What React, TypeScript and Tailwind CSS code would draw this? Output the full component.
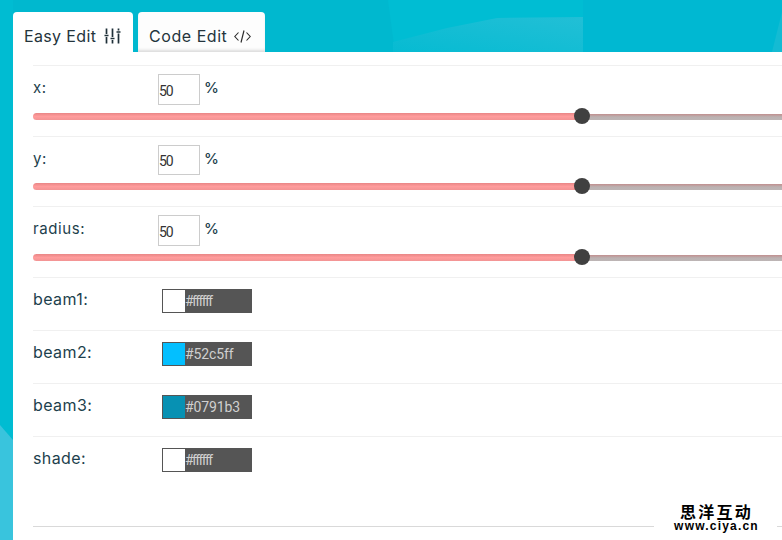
const sliders = [
  { label: "x:", value: "50" },
  { label: "y:", value: "50" },
  { label: "radius:", value: "50" },
];

const colors = [
  { label: "beam1:", hex: "#ffffff", swatch: "bg-white", spacing: "tracking-[-1.6px]" },
  { label: "beam2:", hex: "#52c5ff", swatch: "bg-[#03bfff]", spacing: "tracking-[-0.1px]" },
  { label: "beam3:", hex: "#0791b3", swatch: "bg-[#0791b3]", spacing: "tracking-[-0.1px]" },
  { label: "shade:", hex: "#ffffff", swatch: "bg-white", spacing: "tracking-[-1.6px]" },
];

const SlidersIcon = () => (
  <svg width="17" height="16" viewBox="0 0 17 16" fill="none" stroke="#1f3039" strokeWidth="1.7">
    <path d="M2.5 0.5V6M2.5 9V15.5M0.5 7.5H4.5" />
    <path d="M8.5 0.5V9M8.5 12V15.5M6.5 10.5H10.5" />
    <path d="M14.5 0.5V2.5M14.5 5.5V15.5M12.5 4H16.5" />
  </svg>
);

const CodeIcon = () => (
  <svg width="17" height="13" viewBox="0 0 17 13" fill="none" stroke="#2a2a2a" strokeWidth="1.1">
    <path d="M4.5 2.5L0.8 6.5L4.5 10.5" />
    <path d="M12.5 2.5L16.2 6.5L12.5 10.5" />
    <path d="M10 0.5L7 12.5" />
  </svg>
);

const Slider = () => (
  <div className="flex items-center w-[1098px] relative">
    <div className="h-[7px] w-[549px] rounded-l-full bg-gradient-to-b from-[#e98686] via-[#ff9c9c] to-[#f29494]" />
    <div className="h-[6px] flex-1 bg-gradient-to-b from-[#c08f8f] via-[#bbb2b2] to-[#bdb5b5]" />
    <div className="absolute left-[541px] top-[-5px] w-4 h-4 rounded-full bg-[#404040]" />
  </div>
);

export default function App() {
  return (
    <div className="relative h-[540px] w-full overflow-hidden bg-[#00b8cf] font-['Inter',sans-serif]">
      <svg className="absolute inset-0" width="782" height="540" viewBox="0 0 782 540">
        <defs>
          <linearGradient id="glow" x1="0" y1="1" x2="1" y2="0">
            <stop offset="0" stopColor="#06bbd2" />
            <stop offset="1" stopColor="#22bfd6" />
          </linearGradient>
        </defs>
        <polygon points="388,0 583,0 583,52 395,52" fill="#00bdd3" />
        <polygon points="393,52 393,42 447,28 497,18 583,17 583,52" fill="url(#glow)" />
        <polygon points="583,0 782,0 782,52 583,52" fill="#00b8d2" />
        <polygon points="772,52 782,12 782,52" fill="#14bbd3" />
        <polygon points="0,0 13,0 13,440 0,425" fill="#00bcd2" />
        <polygon points="0,425 13,440 13,540 0,540" fill="#39c4dd" />
      </svg>

      <div className="relative pt-3 pl-[13px]">
        <div className="flex gap-[5px] h-10">
          <div className="flex items-center w-[120px] pl-[11px] pt-2 gap-2 bg-white rounded-t-sm text-[16px] tracking-[0.35px] text-[#24343c]">
            <span>Easy Edit</span>
            <SlidersIcon />
          </div>
          <div className="flex items-center w-[127px] pl-[11px] pt-2 gap-[7px] bg-[#fdfdfd] rounded-t-sm text-[16px] tracking-[0.55px] text-[#24343c] shadow-[inset_0_-3px_3px_-1px_#dcdcdc]">
            <span>Code Edit</span>
            <CodeIcon />
          </div>
        </div>

        <div className="h-[488px] bg-white pl-5 pt-[13px] overflow-hidden">
          {sliders.map((s, i) => (
            <div key={s.label} className={`border-t border-[#f0f0f0] pt-2 ${i === 1 ? "h-[70px]" : "h-[71px]"}`}>
              <div className={`flex items-start ${i === 1 ? "h-[30px]" : "h-[31px]"}`}>
                <span className="w-[125px] pt-[3px] text-[15px] tracking-[0.6px] text-[#1d3f4d]">{s.label}</span>
                <input
                  readOnly
                  value={s.value}
                  className="w-[42px] h-full border border-[#cccccc] pt-[2px] text-[14px] tracking-[-1px] text-[#333] font-['Roboto',sans-serif] outline-none"
                />
                <span className="ml-[4px] pt-[3px] text-[15px] font-medium text-[#1d3f4d]">%</span>
              </div>
              <div className="mt-2">
                <Slider />
              </div>
            </div>
          ))}

          {colors.map((c) => (
            <div key={c.label} className="flex items-start h-[53px] border-t border-[#f0f0f0] pt-3">
              <span className="w-[129px] text-[16px] leading-[19px] tracking-[0.4px] text-[#1d3f4d]">{c.label}</span>
              <div className="flex w-[90px] h-6 -mt-px border border-[#555555] bg-[#555555]">
                <div className={`w-[22px] h-full ${c.swatch}`} />
                <span className={`text-[14px] leading-[22px] text-[#d0d0d0] font-['Roboto',sans-serif] ${c.spacing}`}>{c.hex}</span>
              </div>
            </div>
          ))}

          <div className="mt-[37px] border-t border-[#d9d9d9]" />
        </div>
      </div>

      <div className="absolute right-[5px] bottom-[5px] w-[123px] h-[33px] bg-white flex flex-col items-center text-black pl-[2px]">
        <span className="h-[18px] text-[16px] leading-[18px] font-bold tracking-[2.2px] font-['Noto_Sans_CJK_SC',sans-serif]">思洋互动</span>
        <span className="h-[12px] text-[12px] leading-[12px] font-bold tracking-[1.2px] font-['Liberation_Sans',sans-serif]">www.ciya.cn</span>
      </div>
    </div>
  );
}
